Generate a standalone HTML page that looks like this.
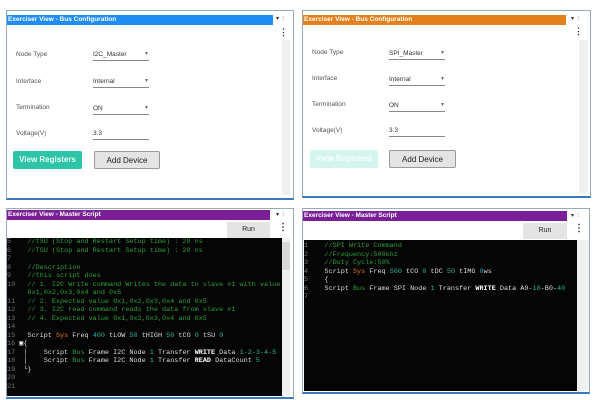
<!DOCTYPE html>
<html><head><style>
*{margin:0;padding:0;box-sizing:border-box}
body{width:600px;height:400px;background:#fff;position:relative;overflow:hidden;font-family:"Liberation Sans",sans-serif}
.a{position:absolute}
.panel{position:absolute;border:1px solid #9ab;background:#fff}
.title{position:absolute;height:10px;color:#fff;font-size:6.5px;font-weight:bold;line-height:10px;padding-left:1px;white-space:nowrap}
.lbl{position:absolute;font-size:6.5px;color:#555}
.dd{position:absolute;width:56px;border-bottom:1px solid #888;font-size:6.5px;color:#333;height:10px}
.dd i{position:absolute;right:0;top:0;font-style:normal;font-size:5px;color:#666}
.btn{position:absolute;height:18px;font-size:8px;text-align:center;line-height:18px;border-radius:2px}
.ctl{position:absolute;font-size:6px;color:#333}
.code{position:absolute;background:#050505;font-family:"Liberation Mono",monospace;font-size:6.8px;line-height:8.5px;color:#ddd;white-space:pre;overflow:hidden}
.g{color:#2e9e3a}.o{color:#e8732a}.t{color:#2fb0a0}.n{color:#777}.w{color:#fff;font-weight:bold}
.sb{position:absolute;background:#f0f0f0}
</style></head><body>

<!-- top left -->
<div class="panel" style="left:6px;top:10px;width:288px;height:190px;border-bottom:2px solid #3a7ac0"></div>
<div class="title" style="left:7px;top:15px;width:266px;background:#1e8cf0">Exerciser View - Bus Configuration</div>
<div class="ctl" style="left:276px;top:15px">▾ &nbsp;⫶</div>
<div class="a" style="left:279px;top:27px;font-size:9px;font-weight:bold;color:#333">⋮</div>
<div class="sb" style="left:282px;top:40px;width:8px;height:155px"></div>
<div class="lbl" style="left:16px;top:51px">Node Type</div>
<div class="dd" style="left:93px;top:51px">I2C_Master<i>▼</i></div>
<div class="lbl" style="left:16px;top:78px">Interface</div>
<div class="dd" style="left:93px;top:78px">Internal<i>▼</i></div>
<div class="lbl" style="left:16px;top:104px">Termination</div>
<div class="dd" style="left:93px;top:105px">ON<i>▼</i></div>
<div class="lbl" style="left:16px;top:130px">Voltage(V)</div>
<div class="dd" style="left:93px;top:130px">3.3</div>
<div class="btn" style="left:13px;top:151px;width:69px;background:#2ec4a8;color:#e8fff8;font-weight:bold">View Registers</div>
<div class="btn" style="left:94px;top:151px;width:66px;background:#e4e4e4;border:1px solid #999;color:#222">Add Device</div>

<!-- top right -->
<div class="panel" style="left:302px;top:10px;width:289px;height:188px;border-bottom:2px solid #3a7ac0"></div>
<div class="title" style="left:303px;top:15px;width:263px;background:#e4801c">Exerciser View - Bus Configuration</div>
<div class="ctl" style="left:571px;top:15px">▾ &nbsp;⫶</div>
<div class="a" style="left:574px;top:26px;font-size:9px;font-weight:bold;color:#333">⋮</div>
<div class="sb" style="left:579px;top:40px;width:9px;height:153px"></div>
<div class="lbl" style="left:312px;top:49px">Node Type</div>
<div class="dd" style="left:389px;top:50px">SPI_Master<i>▼</i></div>
<div class="lbl" style="left:312px;top:75px">Interface</div>
<div class="dd" style="left:389px;top:76px">Internal<i>▼</i></div>
<div class="lbl" style="left:312px;top:101px">Termination</div>
<div class="dd" style="left:389px;top:102px">ON<i>▼</i></div>
<div class="lbl" style="left:312px;top:127px">Voltage(V)</div>
<div class="dd" style="left:389px;top:127px">3.3</div>
<div class="btn" style="left:310px;top:150px;width:68px;background:#d4f4ee;color:#f4fffc;font-weight:bold">View Registers</div>
<div class="btn" style="left:389px;top:150px;width:67px;background:#e4e4e4;border:1px solid #999;color:#222">Add Device</div>

<!-- bottom left -->
<div class="panel" style="left:6px;top:208px;width:288px;height:191px;border-bottom:2px solid #3a7ac0"></div>
<div class="title" style="left:7px;top:210px;width:263px;background:#7a1f98">Exerciser View - Master Script</div>
<div class="ctl" style="left:276px;top:211px">▾ &nbsp;⫶</div>
<div class="btn" style="left:227px;top:222px;width:43px;height:16px;line-height:16px;background:#e4e4e4;font-size:7px;color:#222;border-radius:0">Run</div>
<div class="a" style="left:278px;top:222px;font-size:10px;font-weight:bold;color:#333">⋮</div>
<div class="code" style="left:7px;top:238px;width:275px;height:158px"><span class="n">5 </span>   <span class="g">//tSU (Stop and Restart Setup time) : 20 ns</span>
<span class="n">6 </span>   <span class="g">//TSU (Stop and Restart Setup time) : 20 ns</span>
<span class="n">7</span>
<span class="n">8 </span>   <span class="g">//Description</span>
<span class="n">9 </span>   <span class="g">//this script does</span>
<span class="n">10</span>   <span class="g">// 1. I2C Write command Writes the data to slave #1 with value</span>
<span class="n">  </span>   <span class="g">0x1,0x2,0x3,0x4 and 0x5</span>
<span class="n">11</span>   <span class="g">// 2. Expected value 0x1,0x2,0x3,0x4 and 0x5</span>
<span class="n">12</span>   <span class="g">// 3. I2C read command reads the data from slave #1</span>
<span class="n">13</span>   <span class="g">// 4. Expected value 0x1,0x2,0x3,0x4 and 0x5</span>
<span class="n">14</span>
<span class="n">15</span>   Script <span class="o">Sys</span> Freq <span class="t">400</span> tLOW <span class="t">50</span> tHIGH <span class="t">50</span> tCO <span class="t">0</span> tSU <span class="t">0</span>
<span class="n">16</span> <span class="w">▣</span>{
<span class="n">17</span>  │    Script <span class="g">Bus</span> Frame I2C Node <span class="t">1</span> Transfer <span class="w">WRITE</span> Data <span class="t">1-2-3-4-5</span>
<span class="n">18</span>  │    Script <span class="g">Bus</span> Frame I2C Node <span class="t">1</span> Transfer <span class="w">READ</span> DataCount <span class="t">5</span>
<span class="n">19</span>  └}
<span class="n">20</span>
<span class="n">21</span></div>
<div class="sb" style="left:282px;top:238px;width:8px;height:158px"></div>
<div class="a" style="left:282px;top:242px;width:8px;height:28px;background:#d8d8d8"></div>

<!-- bottom right -->
<div class="panel" style="left:302px;top:208px;width:288px;height:186px;border-bottom:2px solid #3a7ac0"></div>
<div class="title" style="left:303px;top:211px;width:264px;background:#7a1f98">Exerciser View - Master Script</div>
<div class="ctl" style="left:571px;top:212px">▾ &nbsp;⫶</div>
<div class="btn" style="left:523px;top:223px;width:44px;height:16px;line-height:16px;background:#e4e4e4;font-size:7px;color:#222;border-radius:0">Run</div>
<div class="a" style="left:574px;top:223px;font-size:10px;font-weight:bold;color:#333">⋮</div>
<div class="code" style="left:304px;top:240px;width:273px;height:151px;padding-top:2px"><span class="n">1 </span>   <span class="g">//SPI Write Command</span>
<span class="n">2 </span>   <span class="g">//Frequency:500khz</span>
<span class="n">3 </span>   <span class="g">//Duty Cycle:50%</span>
<span class="n">4 </span>   Script <span class="o">Sys</span> Freq <span class="t">500</span> tCO <span class="t">0</span> tDC <span class="t">50</span> tIMG <span class="t">0</span>ws
<span class="n">5 </span>   {
<span class="n">6 </span>   Script <span class="g">Bus</span> Frame SPI Node <span class="t">1</span> Transfer <span class="w">WRITE</span> Data A0-<span class="t">10</span>-B0-<span class="t">40</span>
<span class="n">7</span></div>
<div class="sb" style="left:577px;top:240px;width:12px;height:151px"></div>
</body></html>
